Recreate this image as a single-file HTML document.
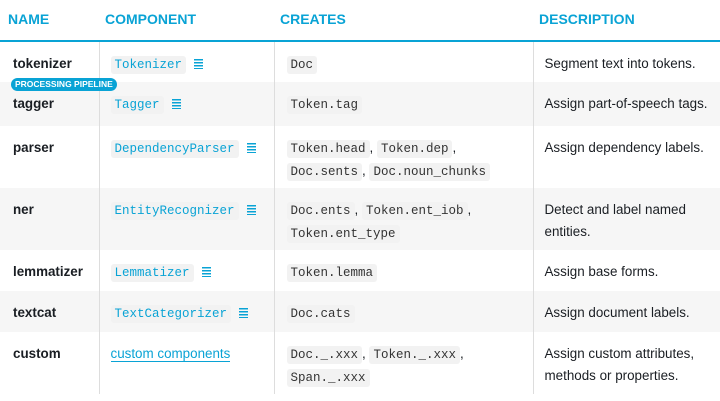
<!DOCTYPE html>
<html><head><meta charset="utf-8"><style>
body{margin:0;width:720px;height:401px;background:#fff;font-family:"Liberation Sans",sans-serif;color:#1a1e23;overflow:hidden;position:relative}
table{border-collapse:collapse;width:720px;table-layout:fixed}
th{height:38px;text-align:left;color:#09a3d5;font-size:14px;font-weight:bold;padding:0 0 2px 0;border-bottom:2px solid #09a3d5;vertical-align:middle}
td{font-size:13.4px;vertical-align:top;padding:11px 0 0 0;border-left:1px solid #ddd;line-height:22px}
td:first-child{border-left:none;padding-left:13px;font-weight:bold}
td:nth-child(2){padding-left:11px}
td:nth-child(3){padding-left:12px}
td:nth-child(4){padding-left:11px}
tr.g td{background:#f6f6f6}
code{font-family:"Liberation Mono",monospace;font-size:12.5px;background:#f2f2f2;padding:2px 4px;border-radius:3px;color:#333}
td:nth-child(2) code{color:#09a3d5}
.ic{display:inline-block;width:9px;height:10px;margin-left:8px;vertical-align:-1px;background:repeating-linear-gradient(#09a3d5 0 1.5px,transparent 1.5px 3px)}
a{color:#09a3d5;text-decoration:none;border-bottom:1px solid #09a3d5}
.badge{position:absolute;left:11px;top:78px;background:#09a3d5;color:#fff;font-size:8.5px;font-weight:bold;padding:1px 4px;border-radius:8px;line-height:11px}
</style></head><body>
<table>
<colgroup><col style="width:99px"><col style="width:175px"><col style="width:259px"><col style="width:187px"></colgroup>
<tr><th style="padding-left:8px">NAME</th><th style="padding-left:6px">COMPONENT</th><th style="padding-left:6px">CREATES</th><th style="padding-left:6px">DESCRIPTION</th></tr>
<tr style="height:41px"><td>tokenizer</td><td><code>Tokenizer</code><span class="ic"></span></td><td><code>Doc</code></td><td>Segment text into tokens.</td></tr>
<tr class="g" style="height:44px"><td>tagger</td><td><code>Tagger</code><span class="ic"></span></td><td><code>Token.tag</code></td><td>Assign part-of-speech tags.</td></tr>
<tr style="height:62px"><td>parser</td><td><code>DependencyParser</code><span class="ic"></span></td><td><code>Token.head</code>, <code>Token.dep</code>, <code>Doc.sents</code>, <code>Doc.noun_chunks</code></td><td>Assign dependency labels.</td></tr>
<tr class="g" style="height:62px"><td>ner</td><td><code>EntityRecognizer</code><span class="ic"></span></td><td><code>Doc.ents</code>, <code>Token.ent_iob</code>, <code>Token.ent_type</code></td><td>Detect and label named entities.</td></tr>
<tr style="height:41px"><td>lemmatizer</td><td><code>Lemmatizer</code><span class="ic"></span></td><td><code>Token.lemma</code></td><td>Assign base forms.</td></tr>
<tr class="g" style="height:41px"><td>textcat</td><td><code>TextCategorizer</code><span class="ic"></span></td><td><code>Doc.cats</code></td><td>Assign document labels.</td></tr>
<tr style="height:62px"><td>custom</td><td><a>custom components</a></td><td><code>Doc._.xxx</code>, <code>Token._.xxx</code>, <code>Span._.xxx</code></td><td>Assign custom attributes, methods or properties.</td></tr>
</table>
<div class="badge">PROCESSING PIPELINE</div>
</body></html>
